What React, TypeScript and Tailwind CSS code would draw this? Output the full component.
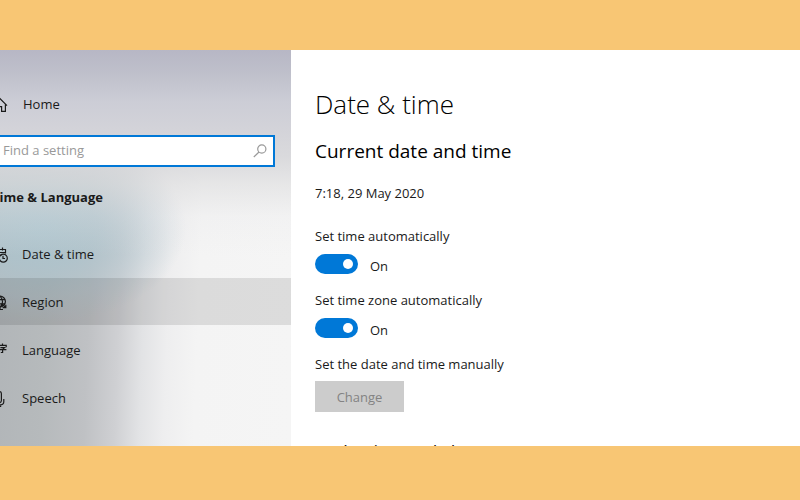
import React, { useState } from 'react';

interface NavItem {
  label: string;
  icon: React.ReactNode;
}

const iconProps = {
  viewBox: '0 0 16 16',
  fill: 'none',
  stroke: 'currentColor',
  strokeWidth: 1.2,
  className: 'h-4 w-4 shrink-0',
  'aria-hidden': true,
};

const HomeIcon = () => (
  <svg {...iconProps}>
    <path d="M1 8.6 8 1.6l7 7M3 7v7.4h3.4V9.6h3.2v4.8H13.4V7" />
  </svg>
);

const DateTimeIcon = () => (
  <svg {...iconProps}>
    <path d="M6.5 13.5h-5v-11h12v4M1.5 5.5h12M4.5 0.5v3M10.5 0.5v3M4 8h2M8 8h2" />
    <circle cx="11.3" cy="11.2" r="4" />
    <path d="M11 8.7v2.8h2" />
  </svg>
);

const RegionIcon = () => (
  <svg {...iconProps}>
    <circle cx="8" cy="6.6" r="5.4" />
    <path d="M3 4.6h10M3 8.8h10M8 1.2c-3.4 3-3.4 8 0 10.8M8 1.2c3.4 3 3.4 8 0 10.8M8 12v2.4M5 14.5h6M9 8.5l4.6 3.8M10.6 12.6h3.2V9.8" />
  </svg>
);

const LanguageIcon = () => (
  <svg {...iconProps}>
    <path d="M1 11 3.5 3 6 11M2 8.5h3M10.5 .4v1.8M7 4.2V2.3h7.2v1.9M8.4 4.6h4.2l-2 1.8v3.1H8.8M7 6.7h7.4" />
  </svg>
);

const SpeechIcon = () => (
  <svg {...iconProps}>
    <rect x="4.6" y="0.6" width="4.8" height="11" rx="2.2" />
    <path d="M2 8v2.6c0 2 1.4 3.2 3.2 3.2h3.6c1.8 0 3-1.2 3-3.2V8M7 13.8v1.6M4.8 15.4h4.4" />
  </svg>
);

const SearchIcon = () => (
  <svg {...iconProps} className="h-4 w-4 shrink-0 text-[#999999]">
    <circle cx="9.8" cy="6" r="4.1" />
    <path d="M7 9 1.8 14" />
  </svg>
);

const navItems: NavItem[] = [
  { label: 'Date & time', icon: <DateTimeIcon /> },
  { label: 'Region', icon: <RegionIcon /> },
  { label: 'Language', icon: <LanguageIcon /> },
  { label: 'Speech', icon: <SpeechIcon /> },
];

interface ToggleProps {
  id: string;
  label: string;
}

const Toggle: React.FC<ToggleProps> = ({ id, label }) => {
  const [on, setOn] = useState(true);

  return (
    <div className="mb-4">
      <label htmlFor={id} className="block leading-5">{label}</label>
      <div className="mt-2 flex h-5 gap-3">
        <input
          id={id}
          type="checkbox"
          checked={on}
          onChange={(e) => setOn(e.target.checked)}
          className="flex h-5 w-[43px] appearance-none items-center rounded-full bg-[#999999] px-[5px] before:h-[10px] before:w-[10px] before:rounded-full before:bg-white checked:justify-end checked:bg-[#0078d7]"
        />
        <span className="pt-0.5 leading-5">{on ? 'On' : 'Off'}</span>
      </div>
    </div>
  );
};

const Sidebar = () => (
  <aside className="w-[291px] shrink-0 overflow-hidden bg-[linear-gradient(180deg,#b7b7c5_0%,#bfc0cb_6%,#cccdd6_13%,#d3d3d9_20%,#d8d8dbf0_27%,#dededfa0_34%,#e8e8ea40_42%,#e8e8ea00_52%),radial-gradient(ellipse_50%_24%_at_14%_45%,#adc4cd_0%,#aec4cdd0_40%,#b4c8d170_72%,#b8cdd600_100%),linear-gradient(92deg,#b1b5b8_0%,#b6babc_18%,#bfc1c4_32%,#cfd0d3_42%,#e2e3e5_50%,#eeeeef_58%,#f4f4f4_68%,#f5f5f5_100%)] pt-8">
    <div className="-ml-2">
      <a href="#home" className="flex h-11 items-center gap-[15px] pt-0.5">
        <HomeIcon />
        Home
      </a>
      <div className="mt-[9px] mr-4 flex h-8 items-center border-2 border-[#0078d7] bg-white pr-[5px] pl-[9px]">
        <input
          type="search"
          aria-label="Find a setting"
          placeholder="Find a setting"
          className="min-w-0 flex-1 outline-none placeholder:text-[#999999]"
        />
        <SearchIcon />
      </div>
      <h2 className="mt-5 leading-5 font-bold">Time &amp; Language</h2>
    </div>
    <nav className="mt-[23px] flex flex-col gap-px">
      {navItems.map((item) => (
        <a
          key={item.label}
          href="#settings"
          className={`flex h-[47px] items-center gap-[14px] pt-0.5 ${item.label === 'Region' ? 'bg-black/10' : ''}`}
        >
          <span className="-ml-2">{item.icon}</span>
          {item.label}
        </a>
      ))}
    </nav>
  </aside>
);

const App = () => {
  return (
    <div className="h-screen bg-[#f8c674] pt-[50px] pb-[54px] font-['Open_Sans','Noto_Sans',sans-serif] text-[13px] text-[#1a1a1a]">
      <div className="flex h-full overflow-hidden bg-white">
        <Sidebar />
        <main className="min-w-0 flex-1 overflow-hidden pt-9 pl-6">
          <h1 className="text-[26px] leading-9 font-light text-black">Date &amp; time</h1>
          <h2 className="mt-[15px] text-[19px] leading-7 text-black">Current date and time</h2>
          <p className="mt-[18px] mb-[23px] leading-5">7:18, 29 May 2020</p>
          <Toggle id="auto-time" label="Set time automatically" />
          <Toggle id="auto-zone" label="Set time zone automatically" />
          <p className="leading-5">Set the date and time manually</p>
          <button
            type="button"
            disabled
            className="mt-[7px] h-[31px] w-[89px] bg-[#cccccc] pt-0.5 text-[#838383]"
          >
            Change
          </button>
          <h3 className="mt-7 leading-5 font-semibold">Synchronise your clock</h3>
        </main>
      </div>
    </div>
  );
};

export default App;
